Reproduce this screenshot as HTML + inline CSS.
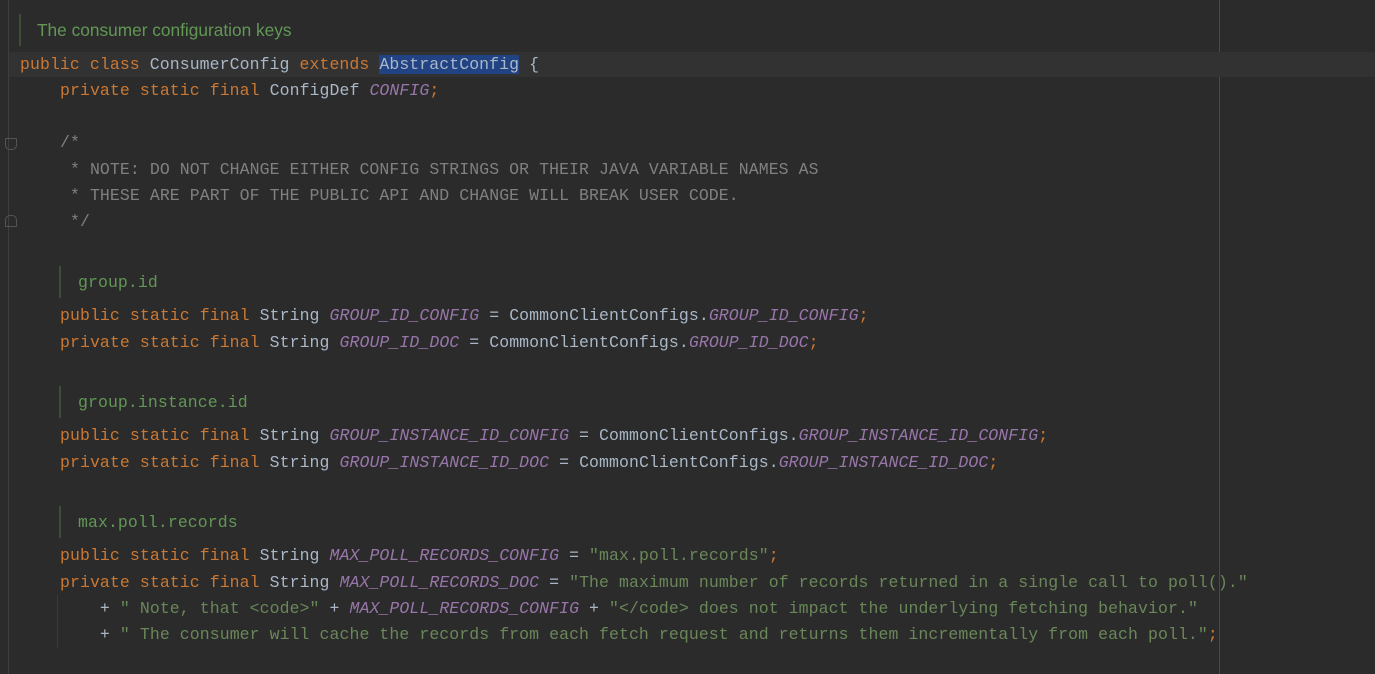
<!DOCTYPE html>
<html><head><meta charset="utf-8"><style>
body{margin:0;width:1375px;height:674px;background:#2b2b2b;overflow:hidden;position:relative;font-family:"Liberation Mono",monospace;font-size:16.5px;letter-spacing:0.08px;color:#a9b7c6}
.l{position:absolute;height:26px;line-height:26px;white-space:pre}
.k{color:#cc7832}.p{color:#9876aa;font-style:italic}.s{color:#6a8759}.c{color:#808080}
.sel{background:#214283}
.doc{position:absolute;color:#629755;white-space:pre;line-height:26px;height:26px}
.bar{position:absolute;width:2px;background:#3d4d37}
</style></head><body>
<div style="position:absolute;left:8px;top:0;width:1px;height:674px;background:#3c3f41"></div>
<div style="position:absolute;left:1219px;top:0;width:1px;height:674px;background:#4a4a4a"></div>
<div style="position:absolute;left:9px;top:52px;width:1366px;height:25px;background:#323232"></div>
<div class="bar" style="left:19px;top:14px;height:32px"></div>
<div class="doc" style="left:37px;top:17px;font-family:'Liberation Sans',sans-serif;font-size:17.3px;letter-spacing:0">The consumer configuration keys</div>
<div class="l" style="left:20px;top:52px"><span class="k">public class </span>ConsumerConfig <span class="k">extends </span><span class="sel">AbstractConfig</span> {</div>
<div class="l" style="left:60px;top:78px"><span class="k">private static final </span>ConfigDef <span class="p">CONFIG</span><span class="k">;</span></div>
<div class="l c" style="left:60px;top:130px">/*</div>
<div class="l c" style="left:60px;top:157px"> * NOTE: DO NOT CHANGE EITHER CONFIG STRINGS OR THEIR JAVA VARIABLE NAMES AS</div>
<div class="l c" style="left:60px;top:183px"> * THESE ARE PART OF THE PUBLIC API AND CHANGE WILL BREAK USER CODE.</div>
<div class="l c" style="left:60px;top:209px"> */</div>
<div style="position:absolute;left:5px;top:138px;width:10px;height:10px;border:1px solid #555;border-radius:1px 1px 5px 5px"></div>
<div style="position:absolute;left:5px;top:215px;width:10px;height:10px;border:1px solid #555;border-radius:5px 5px 1px 1px"></div>
<div class="bar" style="left:59px;top:266px;height:32px"></div>
<div class="doc" style="left:78px;top:270px">group.id</div>
<div class="l" style="left:60px;top:303px"><span class="k">public static final </span>String <span class="p">GROUP_ID_CONFIG</span> = CommonClientConfigs.<span class="p">GROUP_ID_CONFIG</span><span class="k">;</span></div>
<div class="l" style="left:60px;top:330px"><span class="k">private static final </span>String <span class="p">GROUP_ID_DOC</span> = CommonClientConfigs.<span class="p">GROUP_ID_DOC</span><span class="k">;</span></div>
<div class="bar" style="left:59px;top:386px;height:32px"></div>
<div class="doc" style="left:78px;top:390px">group.instance.id</div>
<div class="l" style="left:60px;top:423px"><span class="k">public static final </span>String <span class="p">GROUP_INSTANCE_ID_CONFIG</span> = CommonClientConfigs.<span class="p">GROUP_INSTANCE_ID_CONFIG</span><span class="k">;</span></div>
<div class="l" style="left:60px;top:450px"><span class="k">private static final </span>String <span class="p">GROUP_INSTANCE_ID_DOC</span> = CommonClientConfigs.<span class="p">GROUP_INSTANCE_ID_DOC</span><span class="k">;</span></div>
<div class="bar" style="left:59px;top:506px;height:32px"></div>
<div class="doc" style="left:78px;top:510px">max.poll.records</div>
<div class="l" style="left:60px;top:543px"><span class="k">public static final </span>String <span class="p">MAX_POLL_RECORDS_CONFIG</span> = <span class="s">"max.poll.records"</span><span class="k">;</span></div>
<div class="l" style="left:60px;top:570px"><span class="k">private static final </span>String <span class="p">MAX_POLL_RECORDS_DOC</span> = <span class="s">"The maximum number of records returned in a single call to poll()."</span></div>
<div style="position:absolute;left:57px;top:595px;width:1px;height:53px;background:#3b3b3b"></div>
<div class="l" style="left:60px;top:596px">    + <span class="s">" Note, that &lt;code&gt;"</span> + <span class="p">MAX_POLL_RECORDS_CONFIG</span> + <span class="s">"&lt;/code&gt; does not impact the underlying fetching behavior."</span></div>
<div class="l" style="left:60px;top:622px">    + <span class="s">" The consumer will cache the records from each fetch request and returns them incrementally from each poll."</span><span class="k">;</span></div>
</body></html>
